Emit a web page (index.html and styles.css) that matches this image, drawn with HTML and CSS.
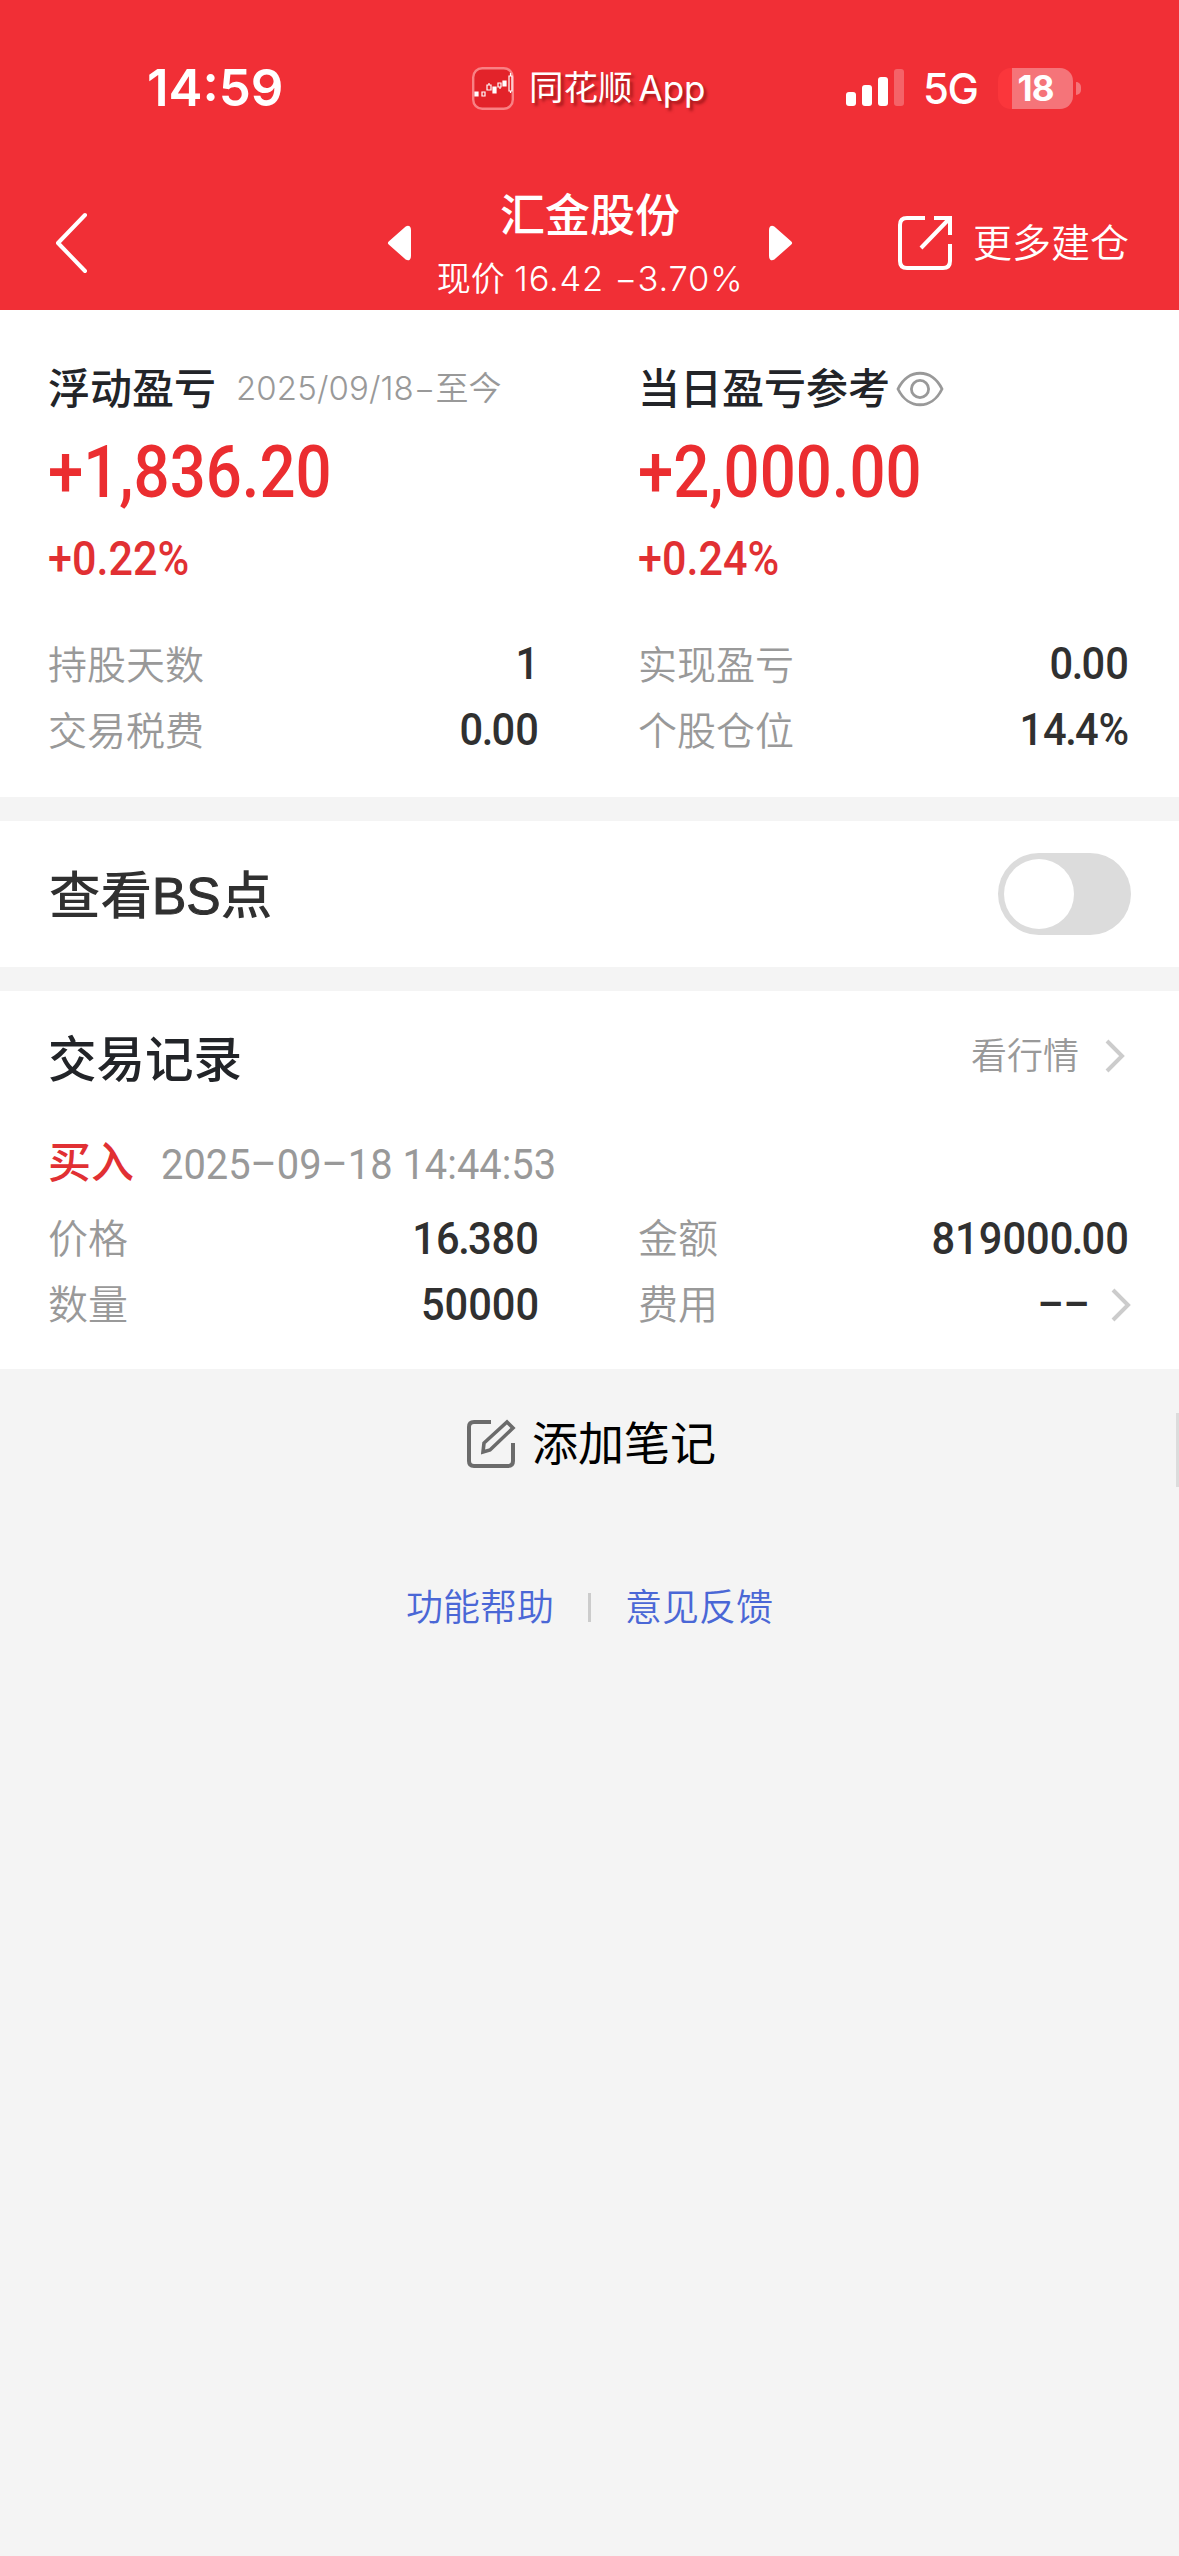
FILE: index.html
```html
<!DOCTYPE html>
<html lang="zh-CN">
<head>
<meta charset="utf-8">
<title>汇金股份</title>
<link rel="stylesheet" href="styles.css">
</head>
<body>
<header class="header">
  <div class="status">
    <span class="clock">14:59</span>
    <div class="app">
      <svg class="app-icon" viewBox="0 0 42 43"><rect x="1.2" y="1.2" width="39.6" height="40.6" rx="9" fill="#e3232a" stroke="#f98184" stroke-width="2.4"/><g stroke="#fff" stroke-width="1.2" fill="none"><path d="M10 25h3v4h-3zM15 18h4v5h-4zM17 16v2M26 16h3v4h-3zM28 20v2M37 9h3v15h-3zM38.500 6v3M38.500 24v2"/><path fill="#fff" d="M3 25h3v4H3zM21 20h3v6h-3zM31 14h3v5h-3z"/></g></svg>
      <span class="app-name">同花顺</span><span class="app-latin">App</span>
    </div>
    <svg class="signal" viewBox="0 0 58 38"><g fill="#fff"><rect y="23" width="10" height="14" rx="3"/><rect x="16" y="16" width="10" height="21" rx="3"/><rect x="32" y="8" width="10" height="29" rx="3"/><rect x="48" width="10" height="37" rx="3" opacity=".25"/></g></svg>
    <span class="network">5G</span>
    <div class="battery"><span class="battery-level">18</span></div>
    <span class="battery-nub"></span>
  </div>
  <nav class="nav">
    <svg class="back" viewBox="0 0 34 62"><path d="M31 3 4 31l27 28" fill="none" stroke="#fff" stroke-width="4" stroke-linecap="round" stroke-linejoin="round"/></svg>
    <div class="stock">
      <svg class="arrow" viewBox="0 0 26 36"><path d="M21 3 4 18l17 15q2 1 2-2V5q0-3-2-2z" fill="#fff" stroke="#fff" stroke-width="4" stroke-linejoin="round"/></svg>
      <div class="stock-info">
        <h1 class="stock-name">汇金股份</h1>
        <p class="stock-price">现价 <span class="latin">16.42 −3.70%</span></p>
      </div>
      <svg class="arrow" viewBox="0 0 26 36"><path d="M5 3l17 15L5 33q-2 1-2-2V5q0-3 2-2z" fill="#fff" stroke="#fff" stroke-width="4" stroke-linejoin="round"/></svg>
    </div>
    <div class="more">
      <svg class="more-icon" viewBox="0 0 56 56"><path d="M28 3H10q-7 0-7 7v36q0 7 7 7h36q7 0 7-7V29M37 3h16v17M52 4 24 33" fill="none" stroke="#fff" stroke-width="4"/></svg>
      <span>更多建仓</span>
    </div>
  </nav>
</header>

<section class="summary">
  <div class="column">
    <div class="summary-title"><h2>浮动盈亏</h2><span class="period">2025/09/18−至今</span></div>
    <p class="amount"><span class="digits">+1,836.20</span></p>
    <p class="percent"><span class="digits">+0.22%</span></p>
    <div class="row"><span>持股天数</span><b>1</b></div>
    <div class="row"><span>交易税费</span><b>0<i>.</i>00</b></div>
  </div>
  <div class="column">
    <div class="summary-title"><h2>当日盈亏参考</h2>
      <svg class="eye" viewBox="0 0 48 36"><g fill="none" stroke="#999" stroke-width="2.800"><path d="M2 18C12-3 36-3 46 18 36 39 12 39 2 18z"/><circle cx="24" cy="18" r="8.600"/></g></svg>
    </div>
    <p class="amount"><span class="digits">+2,000.00</span></p>
    <p class="percent"><span class="digits">+0.24%</span></p>
    <div class="row"><span>实现盈亏</span><b>0<i>.</i>00</b></div>
    <div class="row"><span>个股仓位</span><b>14<i>.</i>4%</b></div>
  </div>
</section>

<section class="bs">
  <span class="bs-label">查看<span class="bs-latin">BS</span>点</span>
  <span class="switch"></span>
</section>

<section class="trades">
  <div class="trades-head">
    <h2>交易记录</h2>
    <a class="quote">看行情 <svg class="chevron" viewBox="0 0 20 34"><path d="M2 2l15 15L2 32" fill="none" stroke="#ccc" stroke-width="4"/></svg></a>
  </div>
  <div class="trade-time"><span class="buy">买入</span><span class="digits">2025–09–18 14:44:53</span></div>
  <div class="trade-grid">
    <div class="row"><span>价格</span><b>16<i>.</i>380</b></div>
    <div class="row"><span>金额</span><b>819000<i>.</i>00</b></div>
    <div class="row"><span>数量</span><b>50000</b></div>
    <div class="row fee"><span>费用</span><b class="dash">––</b><svg class="chevron" viewBox="0 0 20 34"><path d="M2 2l15 15L2 32" fill="none" stroke="#ccc" stroke-width="4"/></svg></div>
  </div>
</section>

<div class="note">
  <svg class="note-icon" viewBox="0 0 50 50"><g fill="none" stroke="#6b6b6b" stroke-width="4"><path d="M25 3H8Q3 3 3 8v34q0 5 5 5h34q5 0 5-5V24"/><path d="M17 33l1-9L41 3l6 6-23 22z" stroke-width="3.600"/></g></svg>
  <span class="note-label">添加笔记</span>
</div>
<footer class="links"><a>功能帮助</a><span class="divider"></span><a>意见反馈</a></footer>
<span class="scrollbar"></span>
</body>
</html>
```
FILE: styles.css
```css
* { box-sizing: border-box; }
body {
  margin: 0;
  min-height: 2556px;
  background: #f4f4f4;
  color: #222428;
  font-family: Inter, "Noto Sans CJK SC", sans-serif;
  position: relative;
}
h1, h2, p { margin: 0; font-weight: 500; }
svg { display: block; flex: none; }
i { font-style: normal; }

.header { height: 310px; background: #f12f36; color: #fff; }
.status { height: 176px; padding-left: 147px; display: flex; align-items: center; white-space: nowrap; }
.clock { width: 325px; font-size: 51px; font-weight: 600; line-height: 60px; }
.app { width: 374px; display: flex; align-items: center; text-shadow: 3px 3px 3px rgba(90, 0, 0, .5); }
.app-icon { width: 42px; height: 43px; margin-right: 15px; }
.app-name { font-size: 34.500px; line-height: 40px; }
.app-latin { margin-left: 6px; font-size: 35px; line-height: 40px; }
.signal { width: 58px; height: 38px; }
.network { width: 55px; margin-left: 19px; padding-top: 2px; font-size: 42px; font-weight: 500; line-height: 50px; letter-spacing: -1.500px; }
.battery {
  width: 75px; height: 41px; margin-left: 20px; border-radius: 13px;
  background: linear-gradient(90deg, #fb363b 14px, #f57479 14px);
  display: flex; align-items: center; justify-content: center;
}
.battery-level { font-size: 35px; font-weight: 700; line-height: 41px; letter-spacing: -1px; }
.battery-nub { width: 5px; height: 13px; margin-left: 3px; border-radius: 0 6px 6px 0; background: #f57479; }

.nav { height: 134px; padding: 0 50px 0 54px; display: flex; align-items: center; }
.back { width: 34px; height: 62px; margin-right: 298px; }
.stock { flex: none; display: flex; align-items: center; width: 408px; justify-content: space-between; }
.arrow { width: 26px; height: 36px; }
.stock-info { text-align: center; white-space: nowrap; margin-top: 5px; }
.stock-name { font-size: 45px; line-height: 66px; }
.stock-price { font-size: 34px; line-height: 60px; font-weight: 350; }
.latin { font-size: 34.500px; letter-spacing: .8px; }
.more { margin-left: auto; display: flex; align-items: center; gap: 20px; font-size: 39px; line-height: 50px; font-weight: 350; white-space: nowrap; }
.more-icon { width: 56px; height: 56px; }

.summary { height: 487px; padding: 50px 49px 0 48px; background: #fff; display: flex; gap: 99px; }
.column { width: 491px; }
.summary-title { height: 58px; display: flex; align-items: center; white-space: nowrap; }
.summary-title h2 { font-size: 42px; line-height: 58px; }
.period { margin: 0 0 6px 20px; font-size: 33px; font-weight: 350; letter-spacing: .1px; color: #999; }
.eye { width: 48px; height: 36px; margin-left: 6px; }
.digits, .row b { display: inline-block; font-family: Roboto, sans-serif; }
.amount { height: 106px; color: #eb2d30; font-size: 73px; line-height: 106px; }
.amount .digits, .percent .digits { transform: scaleX(.87); transform-origin: left; }
.percent { height: 108px; color: #e13033; font-size: 49px; line-height: 68px; }
.percent .digits { transform: scaleX(.88); }
.row { height: 66px; display: flex; align-items: center; justify-content: space-between; color: #999; font-size: 39px; font-weight: 350; line-height: 66px; white-space: nowrap; }
.row b { color: #303030; font-size: 44px; font-weight: 500; transform: scaleX(.945); transform-origin: right; }
.row b i { margin: 0 -2px 0 -1.500px; }
.summary .row b { padding-bottom: 2px; line-height: 64px; }

.bs { height: 146px; margin-top: 24px; padding: 0 48px 0 49px; background: #fff; color: #303030; display: flex; align-items: center; justify-content: space-between; font-size: 51.500px; font-weight: 500; }
.bs-label { padding-bottom: 6px; }
.bs-latin { font-family: "Liberation Sans", sans-serif; font-weight: 400; -webkit-text-stroke: 1px #303030; }
.switch { width: 133px; height: 82px; padding: 6px; border-radius: 41px; background: #dcdcdc; }
.switch::before { content: ""; display: block; width: 70px; height: 70px; border-radius: 50%; background: #fff; }

.trades { height: 378px; margin-top: 24px; padding: 31px 49px 0 48px; background: #fff; }
.trades-head { height: 76px; display: flex; align-items: center; justify-content: space-between; }
.trades-head h2 { font-size: 48.500px; line-height: 76px; }
.quote { display: flex; align-items: center; gap: 26px; padding-right: 5px; margin-bottom: 9px; color: #999; font-size: 36px; line-height: 50px; font-weight: 350; }
.chevron { width: 20px; height: 34px; }
.trade-time { height: 108px; padding-top: 21px; display: flex; align-items: center; gap: 27px; line-height: 87px; white-space: nowrap; }
.buy { color: #e13033; font-size: 43px; font-weight: 500; }
.trade-time .digits { padding-top: 3px; color: #999; font-size: 43px; transform: scaleX(.927); transform-origin: left; }
.trade-grid { display: grid; grid-template-columns: 491px 491px; column-gap: 99px; }
.trade-grid .row { font-size: 40px; }
.fee .dash { margin-left: auto; margin-right: 21px; transform: scaleX(.92); }
.fee .chevron { margin-right: -2px; }

.note { height: 150px; padding-left: 3px; display: flex; align-items: center; justify-content: center; gap: 16px; color: #000; font-size: 46px; line-height: 60px; }
.note-icon { width: 50px; height: 50px; }
.note-label { padding-bottom: 3px; }
.links { height: 172px; display: flex; align-items: center; justify-content: center; gap: 34px; color: #4a67d6; font-size: 37px; font-weight: 350; }
.divider { width: 3px; height: 29px; margin-top: 4px; background: #ccc; }
.scrollbar { position: absolute; right: 0; top: 1413px; width: 3px; height: 74px; background: #dcdcdc; }
```
